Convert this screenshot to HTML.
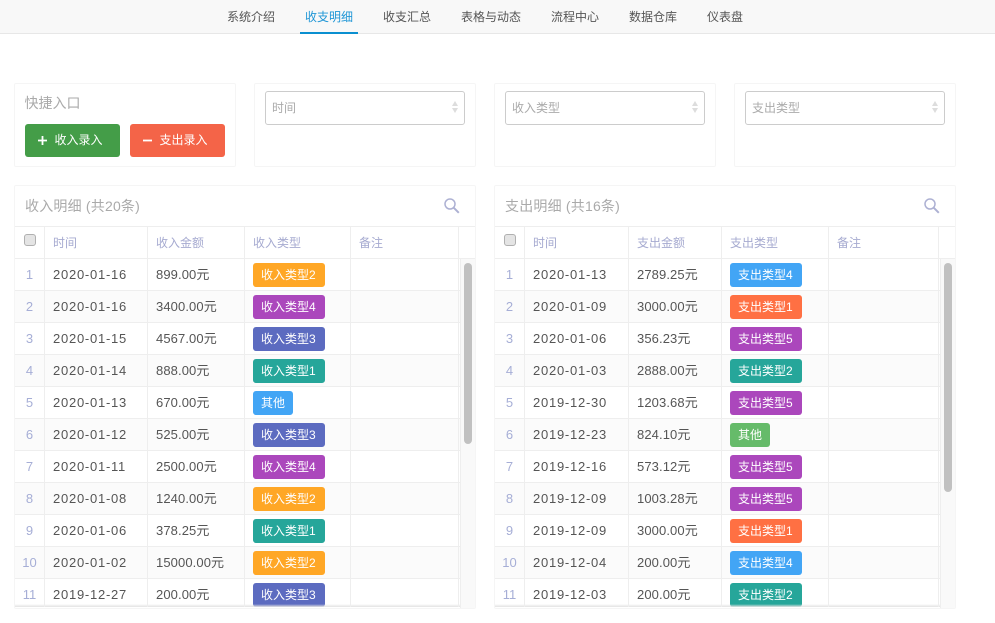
<!DOCTYPE html>
<html lang="zh">
<head>
<meta charset="utf-8">
<title>收支明细</title>
<style>
*{box-sizing:border-box;margin:0;padding:0}
html,body{width:995px;height:623px;overflow:hidden;background:#fff}
body{position:relative;font-family:"Liberation Sans","Noto Sans CJK SC",sans-serif;font-size:12px;color:#555}
.nav{position:absolute;left:0;top:0;width:995px;height:34px;background:#f8f8f8;border-bottom:1px solid #e7e7e7}
.nav a{position:absolute;top:0;line-height:34px;color:#555;white-space:nowrap}
.nav a.on{color:#1f96d6}
.ul{position:absolute;left:300px;top:32px;width:58px;height:2px;background:#0a8fd0}
.card{position:absolute;top:83px;width:222px;height:84px;background:#fff;border:1px solid #f5f5f5;border-radius:2px}
.lbl{position:absolute;left:24.5px;top:94px;font-size:14px;line-height:18px;color:#aaa}
.btn{position:absolute;top:124px;width:95px;height:33px;border-radius:3px;color:#fff;line-height:33px;white-space:nowrap}
.btn span{position:absolute;left:29.5px;top:0;font-size:12px}
.btn svg{position:absolute;left:11.5px;top:11px}
.sel{position:absolute;top:91px;width:200px;height:34px;border:1px solid #ccc;border-radius:3px;background:#fff;color:#aaa;line-height:33px;padding-left:6px}
.sel:after{content:"";position:absolute;right:6px;top:9px;border:3.5px solid transparent;border-top:0;border-bottom:5px solid #ddd;width:0;height:0}
.sel:before{content:"";position:absolute;right:6px;top:16px;border:3.5px solid transparent;border-bottom:0;border-top:5px solid #ddd;width:0;height:0}
.panel{position:absolute;top:185px;width:462px;height:424px;background:#fff;border:1px solid #f5f5f5;border-radius:2px;overflow:hidden}
.title{position:absolute;left:10px;top:10px;font-size:14px;line-height:20px;color:#aaa;white-space:nowrap;letter-spacing:.2px}
.search{position:absolute;left:428px;top:11px}
.hl{position:absolute;left:0;width:462px;height:1px;background:#eee}
.vl{position:absolute;top:41px;width:1px;height:380px;background:#eee;z-index:2}
.cb{position:absolute;left:9px;top:48px;width:12px;height:12px;background:#e4e4e4;border:1px solid #b0b0b0;border-radius:3px}
.th{position:absolute;top:49px;line-height:16px;color:#a6aad0;white-space:nowrap}
.rows{position:absolute;left:0;top:73px;width:445px;height:348px;overflow:hidden}
.r{position:relative;height:32px;border-bottom:1px solid #eee}
.r:nth-child(even){background:#fbfbfb}
.r span{position:absolute;top:0;line-height:31px;white-space:nowrap;font-size:13px}
.r span:nth-child(1){left:0;width:29px;text-align:center;color:#a6aed6}
.r span:nth-child(2){left:38px;letter-spacing:.75px}
.r span:nth-child(3){letter-spacing:.1px}
.r span:nth-child(4){top:4px;width:72px;height:24px;line-height:24px;padding:0 0 0 8px;border-radius:3px;color:#fff;font-size:12px}
.r span.x:nth-child(4){width:40px}
.a .r span:nth-child(3){left:141px}.a .r span:nth-child(4){left:238px}
.b .r span:nth-child(3){left:142px}.b .r span:nth-child(4){left:235px}
.o{background:#ffa726}.p{background:#ab47bc}.n{background:#5c6bc0}.t{background:#26a69a}.l{background:#42a5f5}.d{background:#ff7043}.g{background:#66bb6a}
.track{position:absolute;left:445px;top:73px;width:16px;height:349px;background:#f9f9f9;border-left:1px solid #eee}
.thumb{position:absolute;left:448.5px;top:77px;width:8px;background:#c1c1c1;border-radius:4px}
.shadow{position:absolute;left:0;top:418px;width:445px;height:3px;background:linear-gradient(#f4f4f400,#e2e2e2);z-index:1}
</style>
</head>
<body>
<div class="nav">
<a style="left:227px">系统介绍</a>
<a class="on" style="left:305px">收支明细</a>
<a style="left:383px">收支汇总</a>
<a style="left:461px">表格与动态</a>
<a style="left:551px">流程中心</a>
<a style="left:629px">数据仓库</a>
<a style="left:707px">仪表盘</a>
<div class="ul"></div>
</div>

<div class="card" style="left:14px"></div>
<div class="card" style="left:254px"></div>
<div class="card" style="left:494px"></div>
<div class="card" style="left:734px"></div>

<div class="lbl">快捷入口</div>
<div class="btn" style="left:25px;background:#449d48"><svg width="11" height="11" viewBox="0 0 11 11"><path d="M5.5 1V10M1 5.5H10" stroke="#fff" stroke-width="1.8" fill="none"/></svg><span>收入录入</span></div>
<div class="btn" style="left:130px;background:#f46448"><svg width="11" height="11" viewBox="0 0 11 11"><path d="M1 5.5H10" stroke="#fff" stroke-width="1.8" fill="none"/></svg><span>支出录入</span></div>

<div class="sel" style="left:265px">时间</div>
<div class="sel" style="left:505px">收入类型</div>
<div class="sel" style="left:745px">支出类型</div>

<div class="panel a" style="left:14px">
<div class="title">收入明细 (共20条)</div>
<svg class="search" width="18" height="18" viewBox="0 0 18 18"><circle cx="7" cy="7" r="5" stroke="#adb1d3" stroke-width="1.5" fill="none"/><path d="M10.8 10.8L15.8 15.8" stroke="#adb1d3" stroke-width="2" fill="none"/></svg>
<div class="hl" style="top:40px"></div>
<div class="hl" style="top:72px"></div>
<div class="cb"></div>
<div class="th" style="left:38px">时间</div>
<div class="th" style="left:141px">收入金额</div>
<div class="th" style="left:238px">收入类型</div>
<div class="th" style="left:344px">备注</div>
<div class="rows">
<div class="r"><span>1</span><span>2020-01-16</span><span>899.00元</span><span class="o">收入类型2</span></div>
<div class="r"><span>2</span><span>2020-01-16</span><span>3400.00元</span><span class="p">收入类型4</span></div>
<div class="r"><span>3</span><span>2020-01-15</span><span>4567.00元</span><span class="n">收入类型3</span></div>
<div class="r"><span>4</span><span>2020-01-14</span><span>888.00元</span><span class="t">收入类型1</span></div>
<div class="r"><span>5</span><span>2020-01-13</span><span>670.00元</span><span class="l x">其他</span></div>
<div class="r"><span>6</span><span>2020-01-12</span><span>525.00元</span><span class="n">收入类型3</span></div>
<div class="r"><span>7</span><span>2020-01-11</span><span>2500.00元</span><span class="p">收入类型4</span></div>
<div class="r"><span>8</span><span>2020-01-08</span><span>1240.00元</span><span class="o">收入类型2</span></div>
<div class="r"><span>9</span><span>2020-01-06</span><span>378.25元</span><span class="t">收入类型1</span></div>
<div class="r"><span>10</span><span>2020-01-02</span><span>15000.00元</span><span class="o">收入类型2</span></div>
<div class="r"><span>11</span><span>2019-12-27</span><span>200.00元</span><span class="n">收入类型3</span></div>
</div>
<div class="vl" style="left:29px"></div>
<div class="vl" style="left:132px"></div>
<div class="vl" style="left:229px"></div>
<div class="vl" style="left:335px"></div>
<div class="vl" style="left:443px"></div>
<div class="shadow"></div>
<div class="track"></div>
<div class="thumb" style="height:181px"></div>
</div>

<div class="panel b" style="left:494px">
<div class="title">支出明细 (共16条)</div>
<svg class="search" width="18" height="18" viewBox="0 0 18 18"><circle cx="7" cy="7" r="5" stroke="#adb1d3" stroke-width="1.5" fill="none"/><path d="M10.8 10.8L15.8 15.8" stroke="#adb1d3" stroke-width="2" fill="none"/></svg>
<div class="hl" style="top:40px"></div>
<div class="hl" style="top:72px"></div>
<div class="cb"></div>
<div class="th" style="left:38px">时间</div>
<div class="th" style="left:142px">支出金额</div>
<div class="th" style="left:235px">支出类型</div>
<div class="th" style="left:342px">备注</div>
<div class="rows">
<div class="r"><span>1</span><span>2020-01-13</span><span>2789.25元</span><span class="l">支出类型4</span></div>
<div class="r"><span>2</span><span>2020-01-09</span><span>3000.00元</span><span class="d">支出类型1</span></div>
<div class="r"><span>3</span><span>2020-01-06</span><span>356.23元</span><span class="p">支出类型5</span></div>
<div class="r"><span>4</span><span>2020-01-03</span><span>2888.00元</span><span class="t">支出类型2</span></div>
<div class="r"><span>5</span><span>2019-12-30</span><span>1203.68元</span><span class="p">支出类型5</span></div>
<div class="r"><span>6</span><span>2019-12-23</span><span>824.10元</span><span class="g x">其他</span></div>
<div class="r"><span>7</span><span>2019-12-16</span><span>573.12元</span><span class="p">支出类型5</span></div>
<div class="r"><span>8</span><span>2019-12-09</span><span>1003.28元</span><span class="p">支出类型5</span></div>
<div class="r"><span>9</span><span>2019-12-09</span><span>3000.00元</span><span class="d">支出类型1</span></div>
<div class="r"><span>10</span><span>2019-12-04</span><span>200.00元</span><span class="l">支出类型4</span></div>
<div class="r"><span>11</span><span>2019-12-03</span><span>200.00元</span><span class="t">支出类型2</span></div>
</div>
<div class="vl" style="left:29px"></div>
<div class="vl" style="left:133px"></div>
<div class="vl" style="left:226px"></div>
<div class="vl" style="left:333px"></div>
<div class="vl" style="left:443px"></div>
<div class="shadow"></div>
<div class="track"></div>
<div class="thumb" style="height:229px"></div>
</div>
</body>
</html>
